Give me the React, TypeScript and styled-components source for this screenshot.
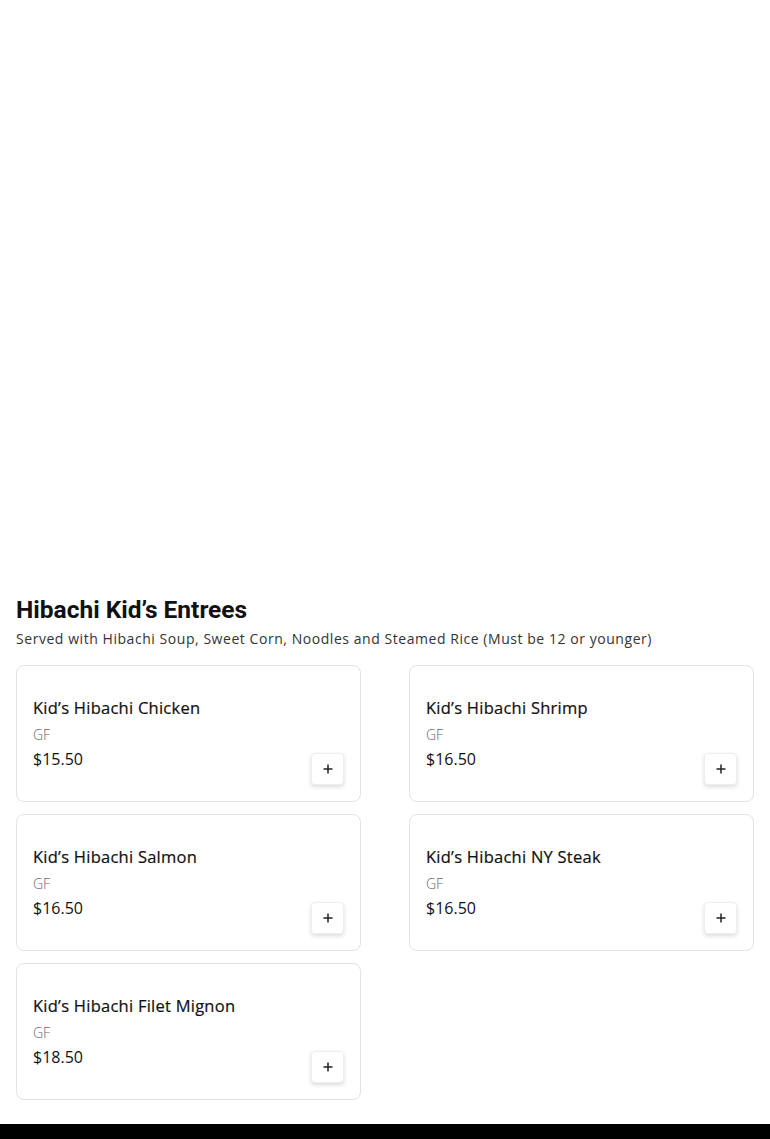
import React from "react";
import styled, { createGlobalStyle } from "styled-components";

const GlobalStyle = createGlobalStyle`
  html, body {
    margin: 0;
    padding: 0;
    background: #ffffff;
  }
  body {
    font-family: "Open Sans", "DejaVu Sans", sans-serif;
    color: #111111;
  }
`;

const Page = styled.div`
  display: flex;
  flex-direction: column;
  min-height: 1139px;
`;

const Hero = styled.div`
  height: 590px;
  background: #ffffff;
`;

const Section = styled.section`
  padding: 0 16px 24px;
`;

const Title = styled.h2`
  margin: 1px 0 0;
  font-family: Roboto, "Liberation Sans", sans-serif;
  font-weight: 700;
  font-size: 24.5px;
  line-height: 38px;
  color: #111111;
`;

const Subtitle = styled.p`
  margin: 0 0 16px;
  font-size: 14px;
  letter-spacing: 0.55px;
  line-height: 20px;
  color: #333333;
`;

const Grid = styled.div`
  display: grid;
  grid-template-columns: 1fr 1fr;
  column-gap: 48px;
  row-gap: 12px;
`;

const Card = styled.div`
  position: relative;
  height: 137px;
  box-sizing: border-box;
  border: 1px solid #e3e3e3;
  border-radius: 8px;
  padding: 28px 16px 16px;
  display: flex;
  flex-direction: column;
`;

const Name = styled.div`
  font-size: 16.5px;
  font-weight: 500;
  letter-spacing: 0.25px;
  line-height: 28px;
  color: #111111;
  -webkit-text-stroke: 0.2px #111111;
`;

const Tag = styled.div`
  font-size: 14px;
  font-weight: 300;
  line-height: 24px;
  padding-top: 1px;
  color: #666666;
`;

const Price = styled.div`
  font-size: 16px;
  line-height: 24px;
  color: #111111;
`;

const AddButton = styled.button`
  position: absolute;
  right: 16px;
  bottom: 16px;
  width: 33px;
  height: 32px;
  border: 1px solid #eeeeee;
  border-radius: 4px;
  background: #ffffff;
  box-shadow: 0 2px 4px rgba(0, 0, 0, 0.14);
  display: flex;
  align-items: center;
  justify-content: center;
  padding: 0;
  cursor: pointer;
`;

const Footer = styled.div`
  margin-top: auto;
  height: 15px;
  background: #000000;
`;

const items = [
  { name: "Kid’s Hibachi Chicken", price: "$15.50" },
  { name: "Kid’s Hibachi Shrimp", price: "$16.50" },
  { name: "Kid’s Hibachi Salmon", price: "$16.50" },
  { name: "Kid’s Hibachi NY Steak", price: "$16.50" },
  { name: "Kid’s Hibachi Filet Mignon", price: "$18.50" },
];

const Plus = () => (
  <svg width="12" height="12" viewBox="0 0 12 12">
    <path d="M6 1.5v9M1.5 6h9" stroke="#222" strokeWidth="1.5" />
  </svg>
);

const App = () => {
  return (
    <Page>
      <GlobalStyle />
      <Hero />
      <Section>
        <Title>Hibachi Kid’s Entrees</Title>
        <Subtitle>
          Served with Hibachi Soup, Sweet Corn, Noodles and Steamed Rice (Must
          be 12 or younger)
        </Subtitle>
        <Grid>
          {items.map((item) => (
            <Card key={item.name}>
              <Name>{item.name}</Name>
              <Tag>GF</Tag>
              <Price>{item.price}</Price>
              <AddButton aria-label="Add">
                <Plus />
              </AddButton>
            </Card>
          ))}
        </Grid>
      </Section>
      <Footer />
    </Page>
  );
};

export default App;
